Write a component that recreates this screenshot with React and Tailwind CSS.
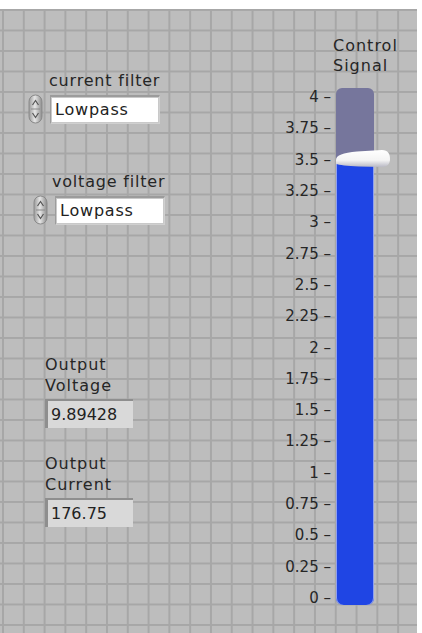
import React from "react";

const scale = ["4", "3.75", "3.5", "3.25", "3", "2.75", "2.5", "2.25", "2", "1.75", "1.5", "1.25", "1", "0.75", "0.5", "0.25", "0"];

function RingArrows() {
  return (
    <svg width="15" height="30" viewBox="0 0 15 30" className="shrink-0">
      <defs>
        <linearGradient id="ringShade" x1="0" x2="1" y1="0" y2="0">
          <stop offset="0" stopColor="#9a9a9a" />
          <stop offset="0.45" stopColor="#e6e6e6" />
          <stop offset="1" stopColor="#8c8c8c" />
        </linearGradient>
      </defs>
      <rect x="1" y="1" width="13" height="28" rx="6.5" fill="url(#ringShade)" stroke="#8a8a8a" strokeWidth="1" />
      <path d="M4.5 11 L7.5 6.5 L10.5 11" fill="none" stroke="#555" strokeWidth="1.2" />
      <path d="M4.5 19 L7.5 23.5 L10.5 19" fill="none" stroke="#555" strokeWidth="1.2" />
      <line x1="3" y1="15" x2="12" y2="15" stroke="#8a8a8a" strokeWidth="1" />
    </svg>
  );
}

function RingControl({ label, value, labelClass, className }) {
  return (
    <div className={className}>
      <div className={"text-[16px] leading-[18px] tracking-[0.8px] text-[#262626] " + labelClass}>{label}</div>
      <div className="mt-[4px] flex items-center gap-[7px]">
        <RingArrows />
        <div className="border-t-2 border-l border-[#9c9c9c] border-b border-r border-b-[#d0d0d0] border-r-[#d0d0d0] bg-[#c9c9c9] p-[1px]">
          <div className="w-[106px] bg-white px-[3px] text-[16px] leading-[24px] tracking-[0.8px] text-[#222]">{value}</div>
        </div>
      </div>
    </div>
  );
}

function Indicator({ title, sub, value, className }) {
  return (
    <div className={className}>
      <div className="text-[16px] leading-[21px] tracking-[1px] text-[#262626]">
        {title}
        <br />
        {sub}
      </div>
      <div className="mt-[3px] w-[88px] border-l-[3px] border-t-2 border-[#8e8e8e] bg-[#d9d9d9] px-[3px] text-[16px] leading-[27px] text-[#222]">
        {value}
      </div>
    </div>
  );
}

function Knob() {
  return (
    <svg width="56" height="20" viewBox="0 0 56 20" className="absolute left-[-1px] top-[61px]">
      <defs>
        <linearGradient id="knobShade" x1="0" x2="0" y1="0" y2="1">
          <stop offset="0" stopColor="#ffffff" />
          <stop offset="0.6" stopColor="#f4f4f4" />
          <stop offset="1" stopColor="#b9b9c4" />
        </linearGradient>
      </defs>
      <path d="M1 11 C1 6 8 4 22 2.5 L47 1 C53 1 55 5 55 10 C55 15 52 18 47 18 L24 17.5 C12 17 4 16 1 15 Z" fill="url(#knobShade)" />
    </svg>
  );
}

export default function App() {
  return (
    <div className="h-[633px] w-[422px] bg-white pt-[9px] font-['DejaVu_Sans','Liberation_Sans',sans-serif]">
      <div className="flex h-[624px] w-[417px] bg-[#bdbdbd] bg-[linear-gradient(to_right,#a7a7a7_2px,transparent_2px),linear-gradient(to_bottom,#a7a7a7_2px,transparent_2px)] bg-size-[20.8px_20.5px] bg-position-[2px_0px]">
        {/* controls and indicators */}
        <div className="flex w-[275px] flex-col pl-[28px]">
          <RingControl className="mt-[63px]" labelClass="ml-[21px]" label="current filter" value="Lowpass" />
          <RingControl className="mt-[49px] pl-[5px]" labelClass="ml-[19px]" label="voltage filter" value="Lowpass" />
          <Indicator className="mt-[129px] pl-[17px]" title="Output" sub="Voltage" value="9.89428" />
          <Indicator className="mt-[25px] pl-[17px]" title="Output" sub="Current" value="176.75" />
        </div>

        {/* vertical slide */}
        <div className="flex flex-col">
          <div className="ml-[58px] mt-[27px] text-[16px] leading-[20px] tracking-[1px] text-[#262626]">
            Control
            <br />
            Signal
          </div>
          <div className="mt-[12px] flex">
            <div className="mt-[2px] flex h-[515px] w-[56px] flex-col justify-between">
              {scale.map((v) => (
                <div key={v} className="h-[14px] text-right text-[15px] leading-[14px] text-[#262626]">
                  {v} –
                </div>
              ))}
            </div>
            <div className="relative ml-[5px] flex h-[517px] w-[38px] flex-col">
              <div className="h-[72px] rounded-t-[6px] bg-[#76769c]" />
              <div className="flex-1 rounded-b-[7px] bg-[#1f45e4] shadow-[inset_1px_0_0_#8fa0f0,inset_-1px_0_0_#8fa0f0]" />
              <Knob />
            </div>
          </div>
        </div>
      </div>
    </div>
  );
}
